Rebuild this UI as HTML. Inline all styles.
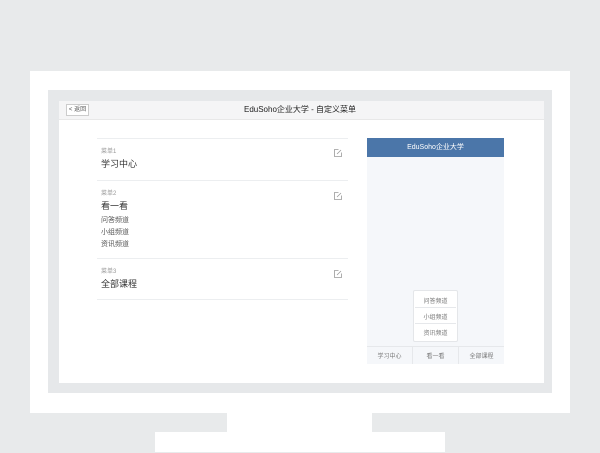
<!DOCTYPE html>
<html><head><meta charset="utf-8"><style>
*{margin:0;padding:0;box-sizing:border-box}
body{width:600px;height:453px;background:#e8eaeb;position:relative;overflow:hidden;font-family:"Liberation Sans","Noto Sans CJK SC",sans-serif;color:#333}
.a{position:absolute}
.lab{font-size:6px;color:#999}
.t{font-size:9px;color:#333}
.s{font-size:7px;color:#555}
.line{height:1px;background:#eceef0;left:97px;width:251px}
.ed{left:334px}
.pt{font-size:6px;color:#777;text-align:center}
</style></head><body>
<div class="a" style="left:30px;top:71px;width:540px;height:342px;background:#fff"></div>
<div class="a" style="left:227px;top:413px;width:145px;height:20px;background:#fff"></div>
<div class="a" style="left:155px;top:432px;width:290px;height:20px;background:#fff"></div>
<div class="a" style="left:48px;top:90px;width:504px;height:303px;background:#e6e8ea"></div>
<div class="a" style="left:59px;top:101px;width:485px;height:282px;background:#fff"></div>
<div class="a" style="left:59px;top:101px;width:485px;height:19px;background:#f5f5f6;border-bottom:1px solid #e8e8e8"></div>
<div class="a" style="left:66px;top:104px;width:23px;height:12px;border:1px solid #ccc;background:#fff;font-size:6px;line-height:10px;text-align:center;color:#555">&lt; 返回</div>
<div class="a" style="left:200px;top:104px;width:200px;text-align:center;font-size:8px;line-height:12px;color:#222">EduSoho企业大学 - 自定义菜单</div>

<div class="a line" style="top:138px"></div>
<div class="a lab" style="left:101px;top:146px">菜单1</div>
<div class="a t" style="left:101px;top:157px">学习中心</div>
<svg class="a ed" style="top:149px" width="8" height="8" viewBox="0 0 8 8"><path d="M4.5 .5H.5v7h7V3.5" fill="none" stroke="#999" stroke-width=".8"/><path d="M3 5L7 1" stroke="#999" stroke-width=".8"/></svg>
<div class="a line" style="top:180px"></div>
<div class="a lab" style="left:101px;top:188px">菜单2</div>
<div class="a t" style="left:101px;top:199px">看一看</div>
<div class="a s" style="left:101px;top:215px">问答频道</div>
<div class="a s" style="left:101px;top:227px">小组频道</div>
<div class="a s" style="left:101px;top:239px">资讯频道</div>
<svg class="a ed" style="top:192px" width="8" height="8" viewBox="0 0 8 8"><path d="M4.5 .5H.5v7h7V3.5" fill="none" stroke="#999" stroke-width=".8"/><path d="M3 5L7 1" stroke="#999" stroke-width=".8"/></svg>
<div class="a line" style="top:258px"></div>
<div class="a lab" style="left:101px;top:266px">菜单3</div>
<div class="a t" style="left:101px;top:277px">全部课程</div>
<svg class="a ed" style="top:270px" width="8" height="8" viewBox="0 0 8 8"><path d="M4.5 .5H.5v7h7V3.5" fill="none" stroke="#999" stroke-width=".8"/><path d="M3 5L7 1" stroke="#999" stroke-width=".8"/></svg>
<div class="a line" style="top:299px"></div>

<div class="a" style="left:367px;top:138px;width:137px;height:226px;background:#f5f7fa"></div>
<div class="a" style="left:367px;top:138px;width:137px;height:19px;background:#4b76a9;color:#fff;font-size:7px;line-height:19px;text-align:center">EduSoho企业大学</div>
<div class="a" style="left:367px;top:346px;width:137px;height:1px;background:#e6e8eb"></div>
<div class="a" style="left:412px;top:347px;width:1px;height:17px;background:#e6e8eb"></div>
<div class="a" style="left:458px;top:347px;width:1px;height:17px;background:#e6e8eb"></div>
<div class="a pt" style="left:367px;top:351px;width:45px">学习中心</div>
<div class="a pt" style="left:413px;top:351px;width:45px">看一看</div>
<div class="a pt" style="left:459px;top:351px;width:45px">全部课程</div>
<div class="a" style="left:413px;top:290px;width:45px;height:52px;background:#fff;border:1px solid #e4e6e9;border-radius:2px"></div>
<div class="a pt" style="left:413px;top:296px;width:45px">问答频道</div>
<div class="a" style="left:415px;top:307px;width:41px;height:1px;background:#e6e8eb"></div>
<div class="a pt" style="left:413px;top:312px;width:45px">小组频道</div>
<div class="a" style="left:415px;top:323px;width:41px;height:1px;background:#e6e8eb"></div>
<div class="a pt" style="left:413px;top:328px;width:45px">资讯频道</div>
</body></html>
